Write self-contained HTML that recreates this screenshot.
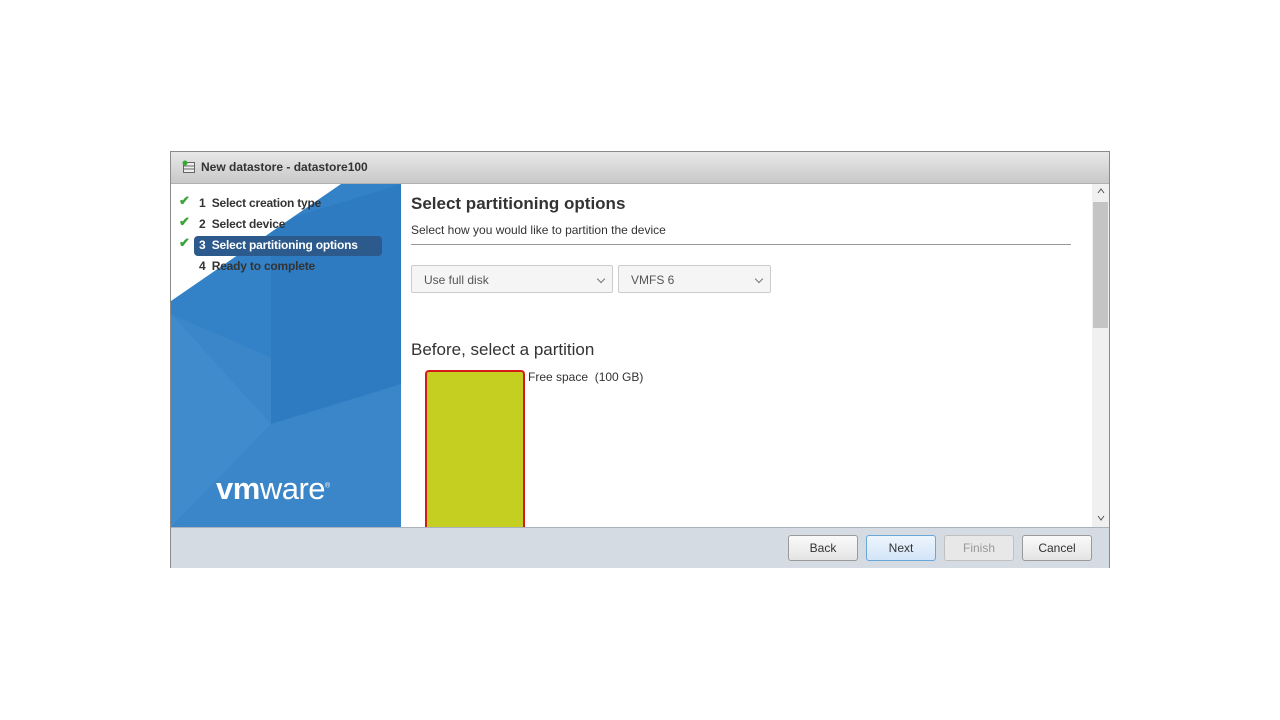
<!DOCTYPE html>
<html><head><style>
body{margin:0;width:1280px;height:720px;background:#fff;font-family:"Liberation Sans",Arial,sans-serif;position:relative;overflow:hidden}
.dlg{position:absolute;left:170px;top:151px;width:938px;height:415px;border:1px solid #8a8a8a;background:#fff}
.title{position:absolute;left:0;top:0;width:938px;height:31px;background:linear-gradient(#e8e8e8,#c9c9c9);border-bottom:1px solid #b0b0b0;font-size:12px;font-weight:bold;color:#333;line-height:31px}
.left{position:absolute;left:0;top:32px;width:230px;height:343px;overflow:hidden}
.step{position:absolute;left:28px;font-size:12px;font-weight:bold;color:#333;height:20px;line-height:20px;letter-spacing:-0.2px}
.chk{position:absolute;left:8px;color:#3aa33a;font-size:13px;font-weight:bold}
.foot{position:absolute;left:0;top:375px;width:938px;height:40px;background:#d5dbe2;border-top:1px solid #a9b2bd}
.btn{position:absolute;top:7px;height:24px;width:68px;border:1px solid #9a9a9a;border-radius:3px;background:linear-gradient(#fafafa,#e4e4e4);font-size:12px;color:#333;text-align:center;line-height:24px}
.sel{position:absolute;top:113px;height:28px;border:1px solid #ccc;border-radius:2px;background:#f5f5f5;font-size:12px;color:#555;line-height:28px;box-sizing:border-box;padding-left:12px}
.sel:after{content:"";position:absolute;right:8px;top:10px;width:5px;height:5px;border-right:1px solid #777;border-bottom:1px solid #777;transform:rotate(45deg)}
</style></head><body>
<div class="dlg">
 <div class="title"><svg style="position:absolute;left:11px;top:8px" width="14" height="14"><rect x="1.5" y="2.5" width="11" height="10" fill="#eee" stroke="#666"/><line x1="2" y1="6" x2="12" y2="6" stroke="#666"/><line x1="2" y1="9" x2="12" y2="9" stroke="#666"/><circle cx="3" cy="3" r="2.5" fill="#3a3"/></svg><span style="position:absolute;left:30px">New datastore - datastore100</span></div>
 <div class="left">
  <svg width="230" height="343" style="position:absolute;left:0;top:0">
   <rect width="230" height="343" fill="#3a86c8"/>
   <polygon points="0,0 230,0 230,120 160,200 0,130" fill="#3381c6"/>
   <polygon points="100,40 230,0 230,200 100,240" fill="#2e7bc2"/>
   <polygon points="0,130 100,240 0,343" fill="#3f8bcb"/>
   <polygon points="0,343 100,240 230,260 230,343" fill="#3a86c8"/>
   <polygon points="0,0 170,0 0,117" fill="#fff"/>
  </svg>
  <div class="chk" style="top:9px">✔</div><div class="step" style="top:9px">1&nbsp; Select creation type</div>
  <div class="chk" style="top:30px">✔</div><div class="step" style="top:30px">2&nbsp; Select device</div>
  <div class="chk" style="top:51px">✔</div>
  <div style="position:absolute;left:23px;top:52px;width:188px;height:20px;background:#2c5a8c;border-radius:4px"></div>
  <div class="step" style="top:51px;color:#fff">3&nbsp; Select partitioning options</div>
  <div class="step" style="top:72px">4&nbsp; Ready to complete</div>
  <div style="position:absolute;left:45px;top:287px;color:#fff;font-size:31px;letter-spacing:-0.5px"><b style="font-weight:900">vm</b>ware<sup style="font-size:7px">®</sup></div>
 </div>
 <div style="position:absolute;left:240px;top:42px;font-size:17px;font-weight:bold;color:#333">Select partitioning options</div>
 <div style="position:absolute;left:240px;top:71px;font-size:12px;color:#333">Select how you would like to partition the device</div>
 <div style="position:absolute;left:240px;top:92px;width:660px;height:1px;background:#999"></div>
 <div class="sel" style="left:240px;width:202px">Use full disk</div>
 <div class="sel" style="left:447px;width:153px">VMFS 6</div>
 <div style="position:absolute;left:240px;top:188px;font-size:17px;color:#333">Before, select a partition</div>
 <div style="position:absolute;left:254px;top:218px;width:96px;height:160px;background:#c4cf22;border:2px solid #d61a1a;border-radius:4px;border-bottom:none"></div>
 <div style="position:absolute;left:357px;top:218px;font-size:12px;color:#333">Free space&nbsp;&nbsp;(100 GB)</div>
 <div style="position:absolute;left:921px;top:32px;width:17px;height:343px;background:#f0f0f0">
  <div style="position:absolute;left:1px;top:18px;width:15px;height:126px;background:#c4c4c4"></div>
 </div>
 <svg style="position:absolute;left:925px;top:35px" width="10" height="8"><path d="M2 6 L5 2 L8 6" fill="none" stroke="#555"/></svg>
 <svg style="position:absolute;left:925px;top:362px" width="10" height="8"><path d="M2 2 L5 6 L8 2" fill="none" stroke="#555"/></svg>
 <div class="foot">
  <div class="btn" style="left:617px">Back</div>
  <div class="btn" style="left:695px;border-color:#6aa6d6;background:linear-gradient(#eef5fd,#d3e5f8)">Next</div>
  <div class="btn" style="left:773px;color:#999;border-color:#c0c0c0;background:#e8e8e8">Finish</div>
  <div class="btn" style="left:851px">Cancel</div>
 </div>
</div>
</body></html>
